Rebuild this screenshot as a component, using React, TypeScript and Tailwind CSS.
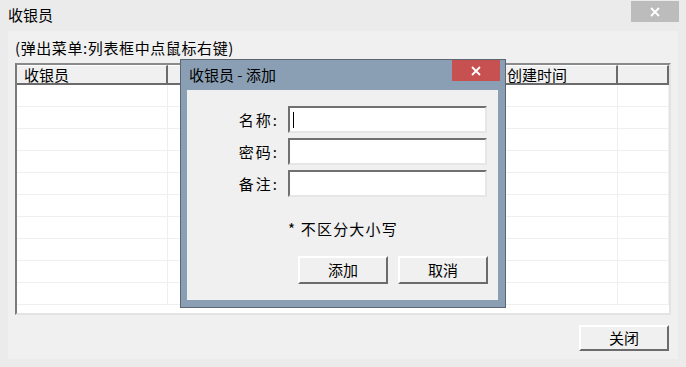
import React from 'react';

const font = { fontFamily: '"Noto Sans CJK SC", "Liberation Sans", sans-serif' };

function CloseGlyph() {
  return (
    <svg width="10" height="10" viewBox="0 0 10 10">
      <path d="M1 1 L9 9 M9 1 L1 9" stroke="#ffffff" strokeWidth="1.8" />
    </svg>
  );
}

// columns 2 and 3 sit under the dialog, so their titles are never seen
const columns = [
  { title: '收银员', width: 'w-[151px]' },
  { title: '', width: 'w-[90px]' },
  { title: '', width: 'w-[242px]' },
  { title: '创建时间', width: 'w-[118px]' },
  { title: '', width: 'flex-1' },
];

const fields = ['名称:', '密码:', '备注:'];

export default function App() {
  const rows = Array.from({ length: 10 });

  return (
    <div className="relative w-[686px] h-[367px] bg-[#ebebeb] text-[15px] text-black overflow-hidden" style={font}>
      {/* window title bar */}
      <div className="h-[31px] flex items-start justify-between">
        <span className="pl-[8px] pt-[5px] leading-[20px]">收银员</span>
        <div className="mr-[7px] mt-[1px] w-[48px] h-[21px] bg-[#bcbcbc] flex items-center justify-center">
          <CloseGlyph />
        </div>
      </div>

      {/* client area */}
      <div className="mx-[8px] h-[328px] bg-[#f0f0f0] px-[7px] flex flex-col">
        <p className="pt-[7px] h-[32px] leading-[20px] tracking-[0.6px]">(弹出菜单:列表框中点鼠标右键)</p>

        {/* list view */}
        <div className="h-[252px] bg-white border-2 border-t-[#8a8a8a] border-l-[#7a7a7a] border-r-[#e3e3e3] border-b-[#e3e3e3] flex flex-col">
          <div className="flex h-[20px] bg-[#f0f0f0]">
            {columns.map((c, i) => (
              <div
                key={i}
                className={`${c.width} h-full border-r-2 border-b-2 border-[#6b6b6b] border-t border-t-[#ffffff] pl-[7px] leading-[17px] whitespace-nowrap overflow-hidden`}
              >
                {c.title}
              </div>
            ))}
          </div>
          {rows.map((_, r) => (
            <div key={r} className="flex h-[22px] shrink-0 border-b border-[#efefef]">
              {columns.map((c, i) => (
                <div key={i} className={`${c.width} h-full border-r border-[#efefef]`} />
              ))}
            </div>
          ))}
        </div>

        <div className="flex justify-end pt-[10px] pr-[2px]">
          <button className="w-[90px] h-[26px] bg-[#f0f0f0] border-2 border-t-white border-l-white border-r-[#6b6b6b] border-b-[#6b6b6b] leading-[20px]">
            关闭
          </button>
        </div>
      </div>

      {/* modal dialog */}
      <div className="absolute left-[180px] top-[59px] w-[326px] h-[249px] bg-[#8a9fb4] border border-[#5c6672] flex flex-col">
        <div className="h-[30px] flex items-start justify-between shrink-0">
          <span className="pl-[8px] pt-[5px] leading-[20px]">收银员 - 添加</span>
          <div className="mr-[5px] w-[48px] h-[21px] bg-[#c75050] flex items-center justify-center">
            <CloseGlyph />
          </div>
        </div>
        <div className="ml-[6px] mr-[7px] h-[210px] bg-[#f0f0f0] pt-[16px]">
          <div className="flex flex-col gap-[5px]">
            {fields.map((f, i) => (
              <div key={f} className="flex items-center">
                <span className="w-[92px] text-right leading-[20px] tracking-[2px]">{f}</span>
                <div className="ml-[9px] relative w-[199px] h-[27px] bg-white border-2 border-t-[#707070] border-l-[#707070] border-r-[#e6e6e6] border-b-[#e6e6e6]">
                  {i === 0 && <div className="absolute left-[3px] top-[4px] w-[1px] h-[16px] bg-black" />}
                </div>
              </div>
            ))}
          </div>
          <p className="pl-[101px] mt-[22px] leading-[20px] tracking-[1.2px]">* 不区分大小写</p>
          <div className="flex gap-[10px] pl-[111px] mt-[17px]">
            <button className="w-[90px] h-[28px] bg-[#f0f0f0] border-2 border-t-white border-l-white border-r-[#6b6b6b] border-b-[#6b6b6b] leading-[20px]">
              添加
            </button>
            <button className="w-[90px] h-[28px] bg-[#f0f0f0] border-2 border-t-white border-l-white border-r-[#6b6b6b] border-b-[#6b6b6b] leading-[20px]">
              取消
            </button>
          </div>
        </div>
      </div>
    </div>
  );
}
